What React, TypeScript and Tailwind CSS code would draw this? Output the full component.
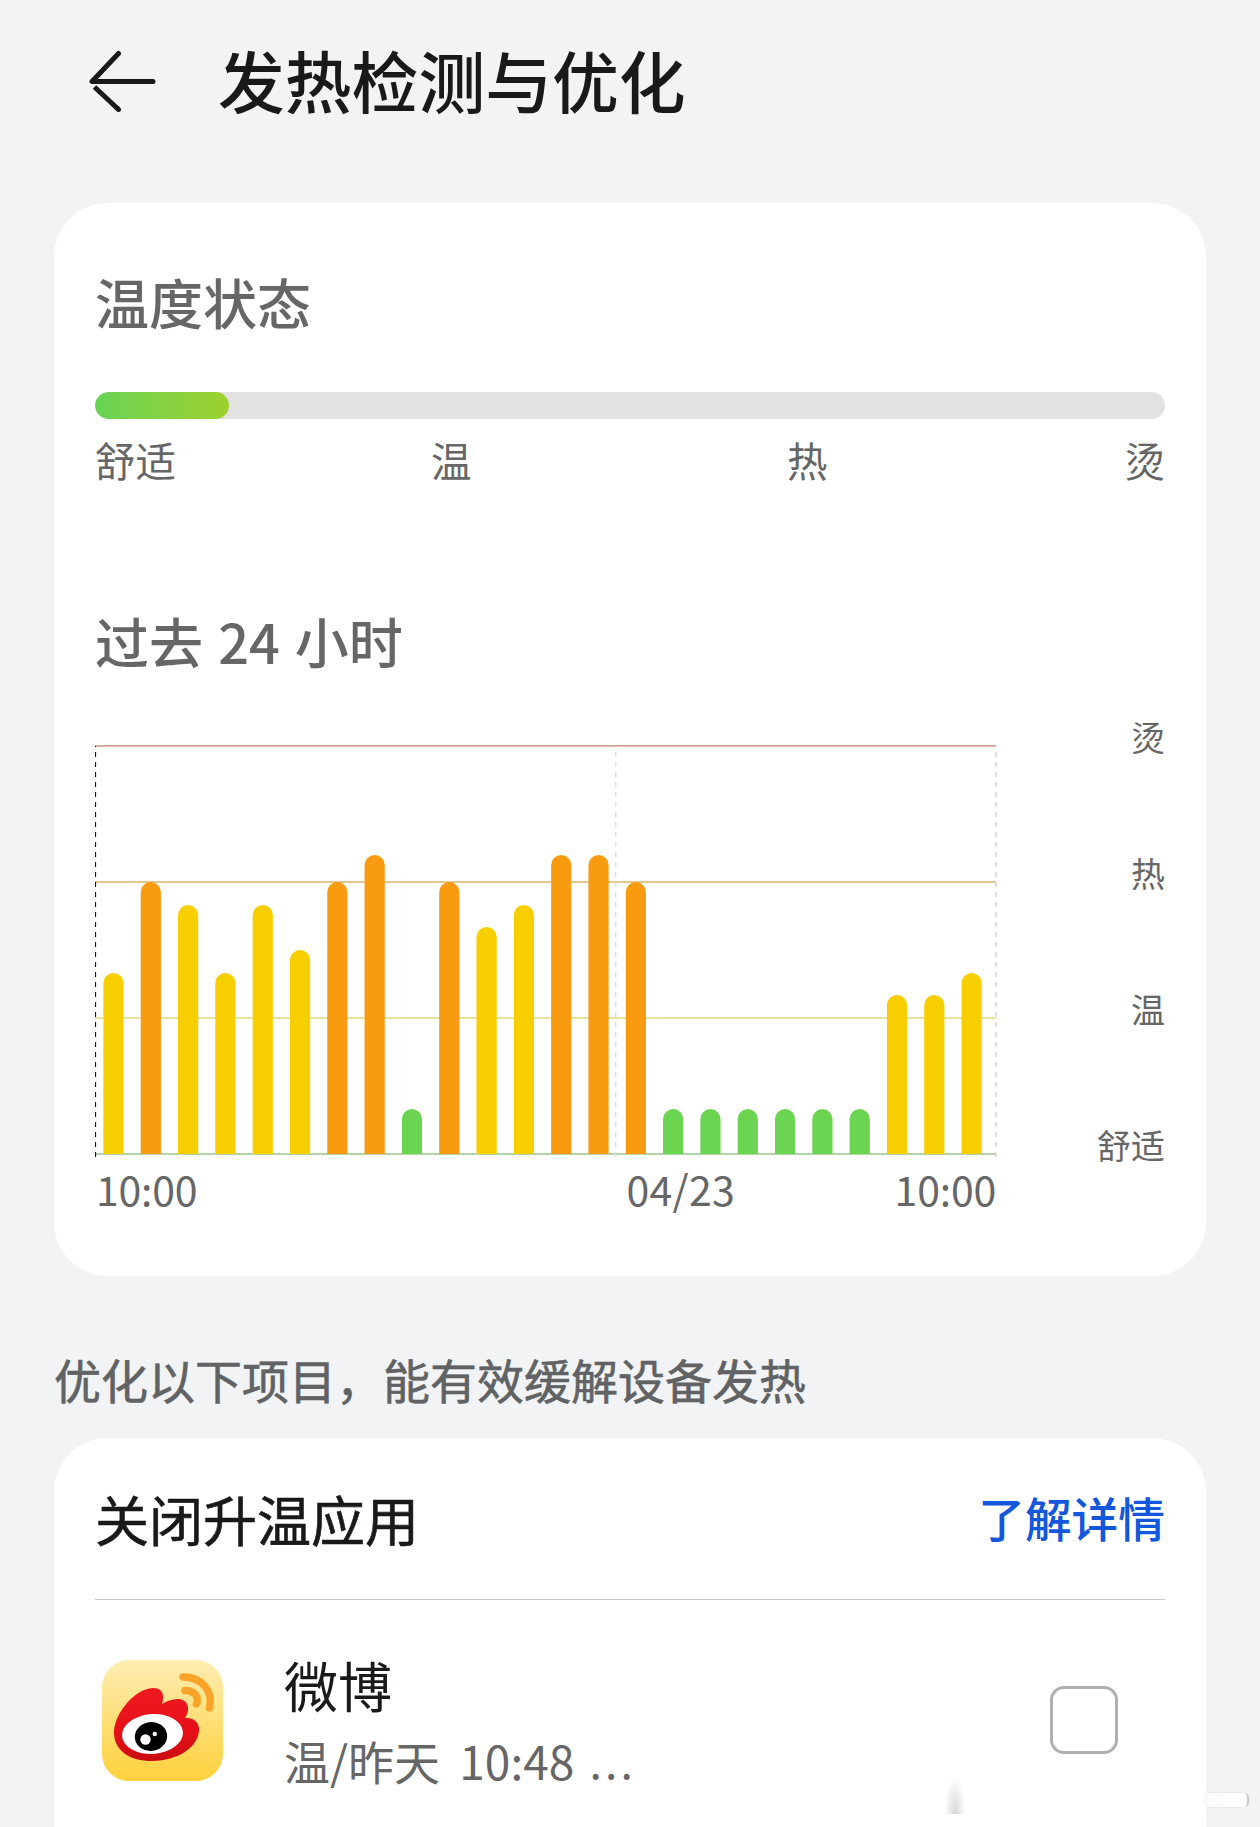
import { useState } from "react";

type Level = "cool" | "warm" | "hot";

type Hour = { level: Level; height: number };

const FILL: Record<Level, string> = {
  cool: "#6bd451",
  warm: "#f7ce00",
  hot: "#f99b11",
};

const HOURS: Hour[] = [
  { level: "warm", height: 181 },
  { level: "hot", height: 272 },
  { level: "warm", height: 249 },
  { level: "warm", height: 181 },
  { level: "warm", height: 249 },
  { level: "warm", height: 204 },
  { level: "hot", height: 272 },
  { level: "hot", height: 299 },
  { level: "cool", height: 45 },
  { level: "hot", height: 272 },
  { level: "warm", height: 227 },
  { level: "warm", height: 249 },
  { level: "hot", height: 299 },
  { level: "hot", height: 299 },
  { level: "hot", height: 272 },
  { level: "cool", height: 45 },
  { level: "cool", height: 45 },
  { level: "cool", height: 45 },
  { level: "cool", height: 45 },
  { level: "cool", height: 45 },
  { level: "cool", height: 45 },
  { level: "warm", height: 159 },
  { level: "warm", height: 159 },
  { level: "warm", height: 181 },
];

const BASE = 409;
const BAR_WIDTH = 20.2;
const BAR_STEP = 37.31;

function barPath(index: number, height: number) {
  const x = 8.4 + index * BAR_STEP;
  const r = BAR_WIDTH / 2;
  const top = BASE - height + r;
  return `M${x} ${BASE}V${top}a${r} ${r} 0 0 1 ${BAR_WIDTH} 0V${BASE}Z`;
}

function HeatChart() {
  return (
    <svg width="902" height="413" viewBox="0 0 902 413" className="block shrink-0">
      <path d="M0 .9H901" stroke="#d5a294" strokeWidth="1.8" />
      <path d="M0 137H901" stroke="#e3c790" strokeWidth="1.8" />
      <path d="M0 273H901" stroke="#eae29a" strokeWidth="1.8" />
      <path d="M0 409H901" stroke="#b5d3ab" strokeWidth="1.8" />
      <path d="M.5 1V412" stroke="#111" strokeWidth="1.2" strokeDasharray="5 5" strokeDashoffset="4" />
      <path d="M520.7 1V412" stroke="#dcdce2" strokeWidth="1.5" strokeDasharray="5 5" strokeDashoffset="4" />
      <path d="M901 1V412" stroke="#d6d6d8" strokeWidth="1.5" strokeDasharray="5 5" strokeDashoffset="4" />
      {HOURS.map((hour, i) => (
        <path key={i} d={barPath(i, hour.height)} fill={FILL[hour.level]} />
      ))}
    </svg>
  );
}

function BackArrow() {
  return (
    <svg width="68" height="62" viewBox="0 0 68 62" fill="none" stroke="#18191b" strokeWidth="5" strokeLinecap="round">
      <path d="M30.500 3.500L4 31.500H65" strokeLinejoin="round" />
      <path d="M6.500 37L30 59" strokeLinecap="butt" />
      <path d="M29.500 58.500L30.500 59.500" />
    </svg>
  );
}

function WeiboIcon() {
  return (
    <svg width="121" height="121" viewBox="0 0 121 121" className="mt-[1px] shrink-0">
      <defs>
        <linearGradient id="tile" x1="0" y1="0" x2="0" y2="1">
          <stop offset="0" stopColor="#feedb4" />
          <stop offset="1" stopColor="#ffd13b" />
        </linearGradient>
        <linearGradient id="flame" x1="0" y1="0" x2="0" y2="1">
          <stop offset="0" stopColor="#ee1a22" />
          <stop offset=".6" stopColor="#e60f17" />
          <stop offset="1" stopColor="#c90d12" />
        </linearGradient>
      </defs>
      <rect width="121" height="121" rx="27" fill="url(#tile)" />
      <path
        d="M12 74C11 56 31 29 51 28C60 28 63 34 60 44C68 39 81 36 85 44C87 49 86 53 83 58C92 57 98 63 97 71C95 90 72 101 50 101C28 101 13 91 12 74Z"
        fill="url(#flame)"
      />
      <ellipse cx="50.5" cy="74" rx="30.5" ry="20" fill="#fff" transform="rotate(-4 50.5 74)" />
      <ellipse cx="49" cy="76.5" rx="16.2" ry="14.5" fill="#000" transform="rotate(-8 49 76.5)" />
      <circle cx="43.5" cy="79.5" r="5.2" fill="#fff" />
      <circle cx="52.8" cy="74" r="2.2" fill="#fff" />
      <g fill="none" stroke="#f9a428" strokeWidth="7.4" strokeLinecap="round">
        <path d="M81 17C99 17 111.500 30 107.500 48" />
        <path d="M83 30.500C92 30.500 97.500 36.500 94.500 44" />
      </g>
    </svg>
  );
}

function AppRow({ name, detail }: { name: string; detail: string }) {
  const [checked, setChecked] = useState(false);

  return (
    <div className="flex items-center h-[239px] pl-[7px] pr-[47px]">
      <WeiboIcon />
      <div className="ml-[61px] mt-[8px] flex flex-col whitespace-nowrap">
        <span className="text-[54px] leading-[74px] text-[#18191a]">{name}</span>
        <span className="text-[46px] leading-[76px] text-[#666] [word-spacing:9px]">
          {detail} <span className="-ml-[4px] font-['Noto_Sans'] tracking-[3.2px]">...</span>
        </span>
      </div>
      <button
        role="checkbox"
        aria-checked={checked}
        onClick={() => setChecked(!checked)}
        className="ml-auto size-[68px] rounded-[14px] border-[3.5px] border-[#b0b0b0] bg-white"
      />
    </div>
  );
}

export default function App() {
  return (
    <div className="relative h-[1827px] w-[1260px] overflow-hidden bg-[#f1f3f5] font-['Noto_Sans_CJK_SC',sans-serif] text-[#666]">
      <header className="flex h-[203px] items-start pl-[88px] pt-[50px]">
        <BackArrow />
        <h1 className="-mt-[3px] ml-[62px] text-[66.8px] font-medium leading-[64px] text-[#18191b]">发热检测与优化</h1>
      </header>

      <section className="mx-[54px] flex h-[1073px] flex-col rounded-[54px] bg-white px-[41px] pt-[62px]">
        <h2 className="text-[54px] font-medium leading-[74px]">温度状态</h2>
        <div className="mt-[53px] h-[27px] shrink-0 overflow-hidden rounded-full bg-[#e2e2e2]">
          <div className="h-full w-[134px] rounded-full bg-linear-to-r from-[#66d354] to-[#9ed02d]" />
        </div>
        <div className="mt-[9px] flex text-[40.5px] leading-[64px]">
          <span>舒适</span>
          <span className="ml-[255px]">温</span>
          <span className="ml-[315.500px]">热</span>
          <span className="ml-auto">烫</span>
        </div>

        <h2 className="mt-[112px] text-[54px] font-medium leading-[74px] [word-spacing:3px]">过去 24 小时</h2>
        <div className="mt-[67px] flex h-[413px] items-start justify-between">
          <HeatChart />
          <div className="-mt-[76px] flex flex-col text-right text-[34px] leading-[136px]">
            <span>烫</span>
            <span>热</span>
            <span>温</span>
            <span>舒适</span>
          </div>
        </div>
        <div className="flex w-[901px] text-[41px] leading-[60px]">
          <span className="ml-[1px] tracking-[-0.2px]">10:00</span>
          <span className="ml-[429px] tracking-[0.3px]">04/23</span>
          <span className="ml-auto tracking-[-0.2px]">10:00</span>
        </div>
      </section>

      <p className="ml-[54px] mt-[71px] text-[47px] leading-[64px] text-[#606264] [-webkit-text-stroke:0.6px_#606264]">
        优化以下项目，能有效缓解设备发热
      </p>

      <section className="mx-[54px] mt-[27px] h-[500px] rounded-t-[54px] bg-white px-[41px]">
        <div className="flex h-[162px] items-center justify-between border-b border-[#cbcbcd]">
          <h3 className="text-[54px] leading-[74px] text-[#18191a] [-webkit-text-stroke:0.6px_#18191a]">关闭升温应用</h3>
          <a href="#" className="-mt-[3px] text-[46.700px] font-medium leading-[64px] text-[#1257dc]">
            了解详情
          </a>
        </div>
        <AppRow name="微博" detail="温/昨天 10:48" />
      </section>

      {/* faint overlay in the lower right corner */}
      <div className="absolute left-[944px] top-[1775px] h-[39px] w-[22px] bg-radial-[at_50%_100%] from-black/15 to-transparent to-70%" />
      <div className="absolute left-[1206px] top-[1793px] h-[14px] w-[43px] rounded-r-[5px] border-r-2 border-black/20 bg-linear-to-r from-white/60 to-white shadow-[0_0_3px_rgba(0,0,0,0.1)]" />
    </div>
  );
}
